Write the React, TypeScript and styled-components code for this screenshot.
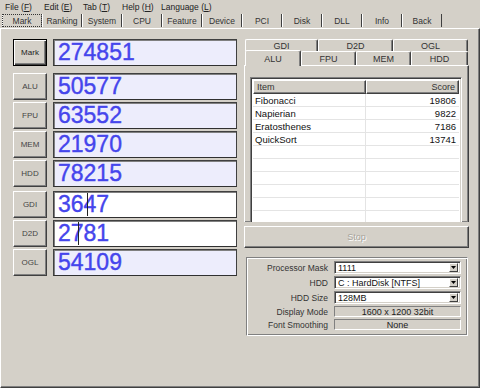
import React from 'react'
import styled, { createGlobalStyle, css } from 'styled-components'

const GlobalStyle = createGlobalStyle`
  html, body {
    margin: 0;
    padding: 0;
    background: #d4d0c8;
  }
  body {
    font-family: "Liberation Sans", Arial, sans-serif;
    font-size: 9px;
    color: #222;
  }
`

const FACE = '#d4d0c8'

const raised = css`
  border: 1px solid;
  border-color: #fff #404040 #404040 #fff;
  box-shadow: inset -1px -1px #808080;
`

const sunken = css`
  border: 1px solid;
  border-color: #808080 #fff #fff #808080;
  box-shadow: inset 1px 1px #404040, inset -1px -1px ${FACE};
`

const Window = styled.div`
  width: 480px;
  height: 388px;
  background: ${FACE};
  display: flex;
  flex-direction: column;
  overflow: hidden;
  box-sizing: border-box;
`

const MenuBar = styled.div`
  height: 13px;
  display: flex;
  align-items: center;
  padding-left: 5px;
  font-size: 8.5px;
  color: #222;
`

const MenuItem = styled.div`
  width: 39px;
  white-space: nowrap;
  u { text-decoration: underline; }
`

const TabStrip = styled.div`
  height: 15px;
  display: flex;
  padding-left: 2px;
`

const Tab = styled.div<{ $active?: boolean }>`
  width: 40px;
  height: 13px;
  margin-top: 1px;
  box-sizing: border-box;
  display: flex;
  align-items: center;
  justify-content: center;
  font-size: 8.5px;
  color: #333;
  border-right: 1px solid #404040;
  border-left: 1px solid #fff;
  ${(p) =>
    p.$active &&
    css`
      outline: 1px dotted #333;
      outline-offset: -1px;
      border-right-color: #808080;
    `}
`

const TabBody = styled.div`
  flex: 1;
  display: flex;
  gap: 7px;
  box-sizing: border-box;
  padding: 10px 0 0 12px;
  border-top: 1px solid #fff;
  border-left: 1px solid #fff;
  border-right: 1px solid #404040;
  border-bottom: 1px solid #404040;
  box-shadow: inset -1px -1px #808080;
`

const LeftColumn = styled.div`
  width: 224px;
  display: flex;
  flex-direction: column;
`

const ScoreRow = styled.div<{ $after: number }>`
  display: flex;
  gap: 6px;
  height: 27px;
  margin-bottom: ${(p) => p.$after}px;
`

const ScoreButton = styled.div<{ $default?: boolean }>`
  width: 34px;
  box-sizing: border-box;
  display: flex;
  align-items: center;
  justify-content: center;
  font-size: 8px;
  color: #444;
  background: ${FACE};
  ${raised}
  ${(p) =>
    p.$default &&
    css`
      border-color: #000;
      box-shadow: inset 1px 1px #fff, inset -1px -1px #404040, inset -2px -2px #808080;
      color: #222;
    `}
`

const ScoreBox = styled.div<{ $blank?: boolean }>`
  position: relative;
  width: 184px;
  box-sizing: border-box;
  display: flex;
  align-items: center;
  padding-left: 4px;
  background: ${(p) => (p.$blank ? '#fff' : '#ededfc')};
  border: 1px solid;
  border-color: #404040 #404040 #303030 #404040;
  box-shadow: inset 1px 1px #808080;
  font-size: 23px;
  color: #4545ec;
  -webkit-text-stroke: 0.4px #4545ec;
  line-height: 1;
`

const Marker = styled.div`
  position: absolute;
  top: 1px;
  bottom: 1px;
  width: 1px;
  background: #222;
`

const RightColumn = styled.div`
  width: 225px;
  display: flex;
  flex-direction: column;
`

const SubTabs = styled.div`
  display: flex;
  flex-direction: column;
  padding-left: 1px;
  position: relative;
  z-index: 1;
`

const SubTabRow = styled.div`
  display: flex;
`

const SubTab = styled.div<{ $w: number; $h: number; $active?: boolean }>`
  width: ${(p) => p.$w}px;
  height: ${(p) => p.$h}px;
  box-sizing: border-box;
  display: flex;
  align-items: center;
  justify-content: center;
  font-size: 9px;
  color: #333;
  border-top: 1px solid #fff;
  border-left: 1px solid #fff;
  border-right: 1px solid #404040;
  border-radius: 2px 2px 0 0;
  box-shadow: inset -1px 0 #808080;
  ${(p) =>
    p.$active &&
    css`
      height: ${p.$h + 2}px;
      margin-top: -1px;
      margin-bottom: -1px;
      background: ${FACE};
    `}
`

const SubPanel = styled.div`
  height: 157px;
  box-sizing: border-box;
  ${raised}
  border-bottom: none;
  padding: 11px 6px 0 5px;
  overflow: hidden;
`

const ListView = styled.div`
  height: 160px;
  box-sizing: border-box;
  ${sunken}
  background: #fff;
  padding: 2px;
`

const ListHeader = styled.div`
  display: grid;
  grid-template-columns: 113px 1fr;
  height: 14px;
`

const HeaderCell = styled.div<{ $right?: boolean }>`
  box-sizing: border-box;
  background: ${FACE};
  ${raised}
  display: flex;
  align-items: center;
  justify-content: ${(p) => (p.$right ? 'flex-end' : 'flex-start')};
  padding: 0 3px;
  font-size: 9px;
  color: #333;
`

const ListRow = styled.div`
  display: grid;
  grid-template-columns: 113px 1fr;
  height: 13px;
  border-bottom: 1px solid #e4e4e4;
  box-sizing: border-box;
`

const ListCell = styled.div<{ $right?: boolean }>`
  display: flex;
  align-items: center;
  justify-content: ${(p) => (p.$right ? 'flex-end' : 'flex-start')};
  padding: 0 3px 0 2px;
  font-size: 9.5px;
  color: #111;
  border-right: ${(p) => (p.$right ? 'none' : '1px solid #e4e4e4')};
`

const StopButton = styled.div`
  margin-top: 4px;
  height: 22px;
  box-sizing: border-box;
  ${raised}
  display: flex;
  align-items: center;
  justify-content: center;
  font-size: 9px;
  color: #a8a49c;
  text-shadow: 1px 1px #fff;
`

const GroupBox = styled.div`
  margin: 9px 1px 0 2px;
  height: 79px;
  box-sizing: border-box;
  border: 1px solid;
  border-color: #808080 #fff #fff #808080;
  box-shadow: inset 1px 1px #fff, inset -1px -1px #808080;
  padding: 3px 6px 0 0;
  display: grid;
  grid-template-columns: 1fr 127px;
  grid-template-rows: 13px 13px 13px 11px 11px;
  column-gap: 6px;
  row-gap: 2px;
`

const Label = styled.div`
  display: flex;
  align-items: center;
  justify-content: flex-end;
  font-size: 8.5px;
  color: #333;
  white-space: nowrap;
`

const Combo = styled.div`
  box-sizing: border-box;
  ${sunken}
  background: #fff;
  display: flex;
  align-items: center;
  padding-left: 3px;
  font-size: 9px;
  color: #111;
`

const ComboText = styled.span`
  flex: 1;
`

const DropButton = styled.div`
  width: 9px;
  height: 9px;
  margin-right: 2px;
  box-sizing: border-box;
  background: ${FACE};
  border: 1px solid;
  border-color: #fff #404040 #404040 #fff;
  display: flex;
  align-items: center;
  justify-content: center;
`

const StaticField = styled.div`
  box-sizing: border-box;
  border: 1px solid;
  border-color: #808080 #fff #fff #808080;
  display: flex;
  align-items: center;
  justify-content: center;
  font-size: 9px;
  color: #222;
`

const menus: [string, string][] = [
  ['File', 'F'],
  ['Edit', 'E'],
  ['Tab', 'T'],
  ['Help', 'H'],
  ['Language', 'L'],
]

const tabs = ['Mark', 'Ranking', 'System', 'CPU', 'Feature', 'Device', 'PCI', 'Disk', 'DLL', 'Info', 'Back']

const scores = [
  { label: 'Mark', value: '274851', after: 7, main: true },
  { label: 'ALU', value: '50577', after: 2 },
  { label: 'FPU', value: '63552', after: 2 },
  { label: 'MEM', value: '21970', after: 2 },
  { label: 'HDD', value: '78215', after: 4 },
  { label: 'GDI', value: '3647', after: 2, blank: true, marker: 33 },
  { label: 'D2D', value: '2781', after: 2, blank: true, marker: 24 },
  { label: 'OGL', value: '54109', after: 0 },
]

const items: [string, string][] = [
  ['Fibonacci', '19806'],
  ['Napierian', '9822'],
  ['Eratosthenes', '7186'],
  ['QuickSort', '13741'],
  ['', ''],
  ['', ''],
  ['', ''],
  ['', ''],
  ['', ''],
  ['', ''],
  ['', ''],
]

function Arrow() {
  return (
    <svg width="5" height="3" viewBox="0 0 5 3">
      <path d="M0 0h5L2.5 3z" fill="#000" />
    </svg>
  )
}

export default function App() {
  return (
    <>
      <GlobalStyle />
      <Window>
        <MenuBar>
          {menus.map(([name, key]) => (
            <MenuItem key={name}>
              {name} (<u>{key}</u>)
            </MenuItem>
          ))}
        </MenuBar>
        <TabStrip>
          {tabs.map((t, i) => (
            <Tab key={t} $active={i === 0}>
              {t}
            </Tab>
          ))}
        </TabStrip>
        <TabBody>
          <LeftColumn>
            {scores.map((s) => (
              <ScoreRow key={s.label} $after={s.after}>
                <ScoreButton $default={s.main}>{s.label}</ScoreButton>
                <ScoreBox $blank={s.blank}>
                  {s.value}
                  {s.marker !== undefined && <Marker style={{ left: s.marker }} />}
                </ScoreBox>
              </ScoreRow>
            ))}
          </LeftColumn>
          <RightColumn>
            <SubTabs>
              <SubTabRow>
                <SubTab $w={73} $h={12}>GDI</SubTab>
                <SubTab $w={75} $h={12}>D2D</SubTab>
                <SubTab $w={75} $h={12}>OGL</SubTab>
              </SubTabRow>
              <SubTabRow>
                <SubTab $w={56} $h={14} $active>ALU</SubTab>
                <SubTab $w={55} $h={14}>FPU</SubTab>
                <SubTab $w={55} $h={14}>MEM</SubTab>
                <SubTab $w={57} $h={14}>HDD</SubTab>
              </SubTabRow>
            </SubTabs>
            <SubPanel>
              <ListView>
                <ListHeader>
                  <HeaderCell>Item</HeaderCell>
                  <HeaderCell $right>Score</HeaderCell>
                </ListHeader>
                {items.map(([name, score], i) => (
                  <ListRow key={i}>
                    <ListCell>{name}</ListCell>
                    <ListCell $right>{score}</ListCell>
                  </ListRow>
                ))}
              </ListView>
            </SubPanel>
            <StopButton>Stop</StopButton>
            <GroupBox>
              <Label>Processor Mask</Label>
              <Combo>
                <ComboText>1111</ComboText>
                <DropButton><Arrow /></DropButton>
              </Combo>
              <Label>HDD</Label>
              <Combo>
                <ComboText>C : HardDisk [NTFS]</ComboText>
                <DropButton><Arrow /></DropButton>
              </Combo>
              <Label>HDD Size</Label>
              <Combo>
                <ComboText>128MB</ComboText>
                <DropButton><Arrow /></DropButton>
              </Combo>
              <Label>Display Mode</Label>
              <StaticField>1600 x 1200 32bit</StaticField>
              <Label>Font Smoothing</Label>
              <StaticField>None</StaticField>
            </GroupBox>
          </RightColumn>
        </TabBody>
      </Window>
    </>
  )
}
